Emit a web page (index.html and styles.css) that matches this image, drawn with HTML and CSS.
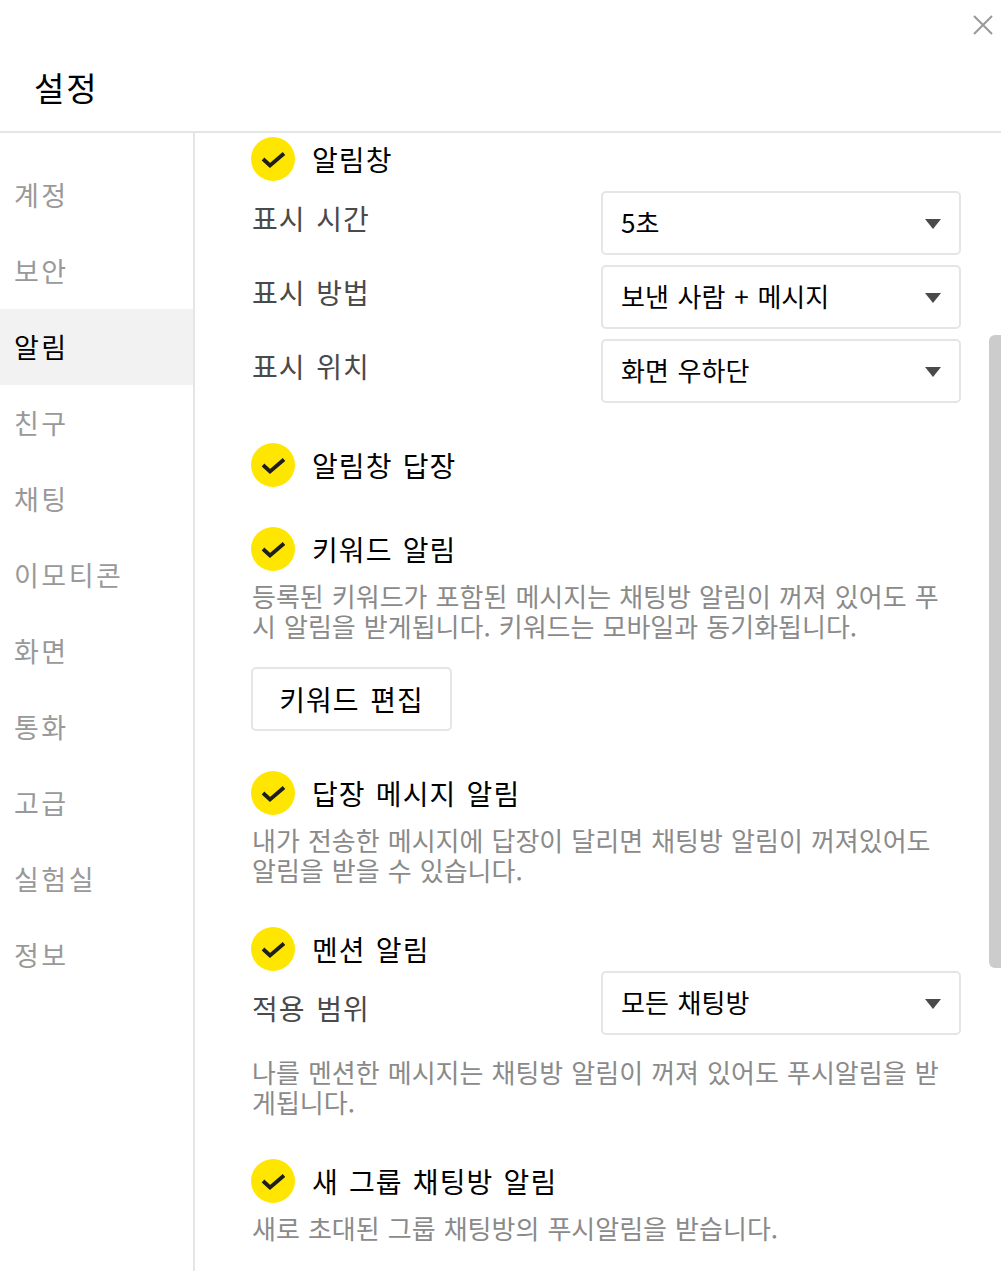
FILE: index.html
```html
<!DOCTYPE html>
<html lang="ko">
<head>
    <meta charset="UTF-8">
    <title>설정</title>
    <link rel="stylesheet" href="styles.css">
</head>
<body>
    <header class="top">
        <h1>설정</h1>
        <svg class="close" width="20" height="20" viewBox="0 0 20 20"><path d="M1 1 L19 19 M19 1 L1 19" stroke="#999" stroke-width="2" fill="none"/></svg>
    </header>
    <div class="wrap">
        <nav class="side">
            <a>계정</a>
            <a>보안</a>
            <a class="on">알림</a>
            <a>친구</a>
            <a>채팅</a>
            <a>이모티콘</a>
            <a>화면</a>
            <a>통화</a>
            <a>고급</a>
            <a>실험실</a>
            <a>정보</a>
        </nav>
        <main class="main">
            <div class="check first">
                <svg width="44" height="44" viewBox="0 0 44 44"><circle cx="22" cy="22" r="22" fill="#ffe600"/><path d="M12 22 L19 28.5 L33 16.5" stroke="#1e1e1e" stroke-width="3.8" fill="none"/></svg>
                <span>알림창</span>
            </div>
            <div class="row"><label>표시 시간</label><div class="select">5초</div></div>
            <div class="row"><label>표시 방법</label><div class="select">보낸 사람 + 메시지</div></div>
            <div class="row"><label>표시 위치</label><div class="select">화면 우하단</div></div>

            <div class="check s40">
                <svg width="44" height="44" viewBox="0 0 44 44"><circle cx="22" cy="22" r="22" fill="#ffe600"/><path d="M12 22 L19 28.5 L33 16.5" stroke="#1e1e1e" stroke-width="3.8" fill="none"/></svg>
                <span>알림창 답장</span>
            </div>

            <div class="check s40">
                <svg width="44" height="44" viewBox="0 0 44 44"><circle cx="22" cy="22" r="22" fill="#ffe600"/><path d="M12 22 L19 28.5 L33 16.5" stroke="#1e1e1e" stroke-width="3.8" fill="none"/></svg>
                <span>키워드 알림</span>
            </div>
            <p class="desc">등록된 키워드가 포함된 메시지는 채팅방 알림이 꺼져 있어도 푸시 알림을 받게됩니다. 키워드는 모바일과 동기화됩니다.</p>
            <button class="btn">키워드 편집</button>

            <div class="check s40">
                <svg width="44" height="44" viewBox="0 0 44 44"><circle cx="22" cy="22" r="22" fill="#ffe600"/><path d="M12 22 L19 28.5 L33 16.5" stroke="#1e1e1e" stroke-width="3.8" fill="none"/></svg>
                <span>답장 메시지 알림</span>
            </div>
            <p class="desc">내가 전송한 메시지에 답장이 달리면 채팅방 알림이 꺼져있어도 알림을 받을 수 있습니다.</p>

            <div class="check s42">
                <svg width="44" height="44" viewBox="0 0 44 44"><circle cx="22" cy="22" r="22" fill="#ffe600"/><path d="M12 22 L19 28.5 L33 16.5" stroke="#1e1e1e" stroke-width="3.8" fill="none"/></svg>
                <span>멘션 알림</span>
            </div>
            <div class="row flush"><label>적용 범위</label><div class="select">모든 채팅방</div></div>
            <p class="desc after">나를 멘션한 메시지는 채팅방 알림이 꺼져 있어도 푸시알림을 받게됩니다.</p>

            <div class="check s42">
                <svg width="44" height="44" viewBox="0 0 44 44"><circle cx="22" cy="22" r="22" fill="#ffe600"/><path d="M12 22 L19 28.5 L33 16.5" stroke="#1e1e1e" stroke-width="3.8" fill="none"/></svg>
                <span>새 그룹 채팅방 알림</span>
            </div>
            <p class="desc">새로 초대된 그룹 채팅방의 푸시알림을 받습니다.</p>
        </main>
    </div>
    <div class="scrollbar"></div>
</body>
</html>
```

FILE: styles.css
```css
html, body {
    margin: 0;
    height: 1271px;
    overflow: hidden;
}

body {
    position: relative;
    background: #fff;
    font-family: "Noto Sans CJK KR", "Noto Sans", sans-serif;
    color: #000;
}

.top {
    height: 131px;
    border-bottom: 2px solid #e5e5e5;
    display: flex;
    align-items: flex-start;
    justify-content: space-between;
}

.top h1 {
    margin: 65px 0 0 34px;
    font-size: 33px;
    font-weight: 400;
    line-height: 44px;
    letter-spacing: 2px;
}

.close {
    margin: 15px 8px 0 0;
}

.wrap {
    display: flex;
    height: 1138px;
}

.side {
    width: 193px;
    border-right: 2px solid #e5e5e5;
    padding-top: 24px;
    flex: none;
}

.side a {
    display: block;
    height: 76px;
    line-height: 76px;
    padding-left: 14px;
    font-size: 27px;
    letter-spacing: 2.5px;
    color: #999;
}

.side a.on {
    background: #f2f2f2;
    color: #000;
}

.main {
    flex: 1;
    padding: 4px 40px 0 56px;
}

.check {
    display: flex;
    align-items: center;
    gap: 17px;
    height: 44px;
    font-size: 28px;
    letter-spacing: 1.1px;
    word-spacing: 1.2px;
}

.check svg {
    flex: none;
}

.check span {
    padding-bottom: 1px;
}

.check.first {
    margin-bottom: 10px;
}

.s40 {
    margin-top: 40px;
}

.s42 {
    margin-top: 42px;
}

.row {
    display: flex;
    justify-content: space-between;
    margin-bottom: 10px;
}

.row.flush {
    margin-bottom: 0;
}

.row label {
    font-size: 28px;
    line-height: 54px;
    color: #4a4a4a;
    letter-spacing: 1px;
    word-spacing: 2px;
    padding-left: 1px;
}

.row.flush label {
    padding-top: 10px;
}

.select {
    box-sizing: border-box;
    width: 360px;
    height: 64px;
    border: 2px solid #e5e5e5;
    border-radius: 5px;
    padding: 0 18px;
    font-size: 26px;
    line-height: 58px;
    word-spacing: 1.5px;
    position: relative;
}

.select::after {
    content: "";
    position: absolute;
    right: 18px;
    top: 26px;
    border-left: 8px solid transparent;
    border-right: 8px solid transparent;
    border-top: 10px solid #4a4a4a;
}

.desc {
    margin: 10px 0 0;
    padding-left: 1px;
    font-size: 26px;
    line-height: 30px;
    word-spacing: 0.8px;
    color: #8a8a8a;
    word-break: break-all;
}

.desc.after {
    margin-top: 22px;
}

.btn {
    display: block;
    box-sizing: border-box;
    width: 201px;
    height: 64px;
    margin-top: 26px;
    background: #fff;
    border: 2px solid #e5e5e5;
    border-radius: 5px;
    font-family: inherit;
    font-size: 28px;
    letter-spacing: 1px;
    word-spacing: 2px;
    color: #000;
    padding: 0;
}

.scrollbar {
    position: absolute;
    right: 0;
    top: 335px;
    width: 12px;
    height: 633px;
    background: #ccc;
    border-radius: 6px 0 0 6px;
}
```
